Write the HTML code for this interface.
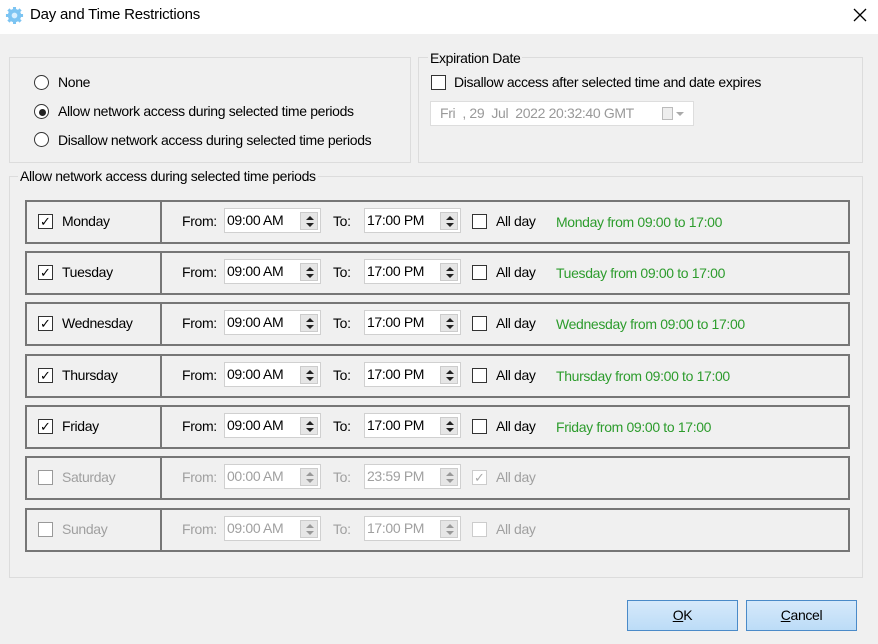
<!DOCTYPE html>
<html><head><meta charset="utf-8"><style>
*{box-sizing:border-box;margin:0;padding:0}
body{width:878px;height:644px;background:#f0f0f0;font-family:"Liberation Sans",sans-serif;font-size:14px;color:#000;position:relative;overflow:hidden;letter-spacing:-0.35px}
.a{position:absolute;white-space:nowrap}
.title{left:0;top:0;width:878px;height:34px;background:#fff}
.grp{position:absolute;border:1px solid #dcdcdc}
.leg{position:absolute;background:#f0f0f0;padding:0 2px;line-height:16px}
.rad{position:absolute;width:15px;height:15px;border:1px solid #333;border-radius:50%;background:#fff}
.cb{position:absolute;width:15px;height:15px;border:1px solid #333;background:#fff}
.row{position:absolute;left:25px;width:825px;height:44px;border:2px solid #767676}
.row .div{position:absolute;left:133px;top:-2px;width:2px;height:44px;background:#767676}
.inp{position:absolute;width:97px;height:25px;border:1px solid #d0d0d0;background:#fff;padding-left:2px;line-height:23px}
.sp{position:absolute;right:2px;top:3px;width:18px;height:18px;background:#e6e6e6;border:1px solid #ccc}
.sp:before{content:"";position:absolute;left:5px;top:3px;border:4px solid transparent;border-bottom:4px solid #222;border-top:0}
.sp:after{content:"";position:absolute;left:5px;top:10px;border:4px solid transparent;border-top:4px solid #222;border-bottom:0}
.dis{color:#a0a0a0}
.dis .cb{border-color:#999}
.dis .sp:before{border-bottom-color:#999}.dis .sp:after{border-top-color:#999}
.g{color:#2d9c2d}
.ck{font-size:13px}
.btn{position:absolute;height:31px;width:111px;border:1px solid #4a8ac8;background:linear-gradient(#d6e9fa,#bcdcf7);text-align:center;line-height:29px}
</style></head><body>
<div class="a title"></div>
<svg class="a" style="left:5px;top:6px" width="19" height="19" viewBox="0 0 20 20"><g fill="#7cc4f2"><circle cx="10" cy="10" r="7"/><g stroke="#7cc4f2" stroke-width="3.2"><path d="M10 1v18M1 10h18M3.6 3.6l12.8 12.8M16.4 3.6L3.6 16.4"/></g></g><circle cx="10" cy="10" r="3" fill="#d6efff"/></svg>
<div class="a" style="left:30px;top:6px;font-size:15px;letter-spacing:-0.2px">Day and Time Restrictions</div>
<svg class="a" style="left:853px;top:8px" width="14" height="14" viewBox="0 0 14 14"><path d="M1 1L13 13M13 1L1 13" stroke="#000" stroke-width="1.3"/></svg>

<div class="grp" style="left:9px;top:57px;width:402px;height:106px"></div>
<div class="rad" style="left:34px;top:75px"></div><div class="a" style="left:58px;top:74px">None</div>
<div class="rad" style="left:34px;top:104px"></div><div class="a" style="left:39px;top:109px;width:7px;height:7px;border-radius:50%;background:#222"></div><div class="a" style="left:58px;top:103px">Allow network access during selected time periods</div>
<div class="rad" style="left:34px;top:132px"></div><div class="a" style="left:58px;top:132px">Disallow network access during selected time periods</div>

<div class="grp" style="left:418px;top:57px;width:445px;height:106px"></div>
<div class="leg" style="left:428px;top:50px">Expiration Date</div>
<div class="cb" style="left:431px;top:75px"></div><div class="a" style="left:454px;top:74px">Disallow access after selected time and date expires</div>
<div class="a" style="left:430px;top:101px;width:264px;height:25px;border:1px solid #ddd;background:#fff;color:#999;line-height:23px;padding-left:9px">Fri&nbsp; , 29&nbsp; Jul&nbsp; 2022 20:32:40 GMT</div>
<div class="a" style="left:662px;top:107px;width:11px;height:13px;border:1px solid #bbb;background:#eee"></div>
<div class="a" style="left:676px;top:112px;border:4px solid transparent;border-top:4px solid #aaa"></div>

<div class="grp" style="left:9px;top:176px;width:854px;height:402px"></div>
<div class="leg" style="left:18px;top:168px">Allow network access during selected time periods</div>

<div class="row" style="top:200px"><div class="div"></div></div>
<div class="row" style="top:251px"><div class="div"></div></div>
<div class="row" style="top:302px"><div class="div"></div></div>
<div class="row" style="top:354px"><div class="div"></div></div>
<div class="row" style="top:405px"><div class="div"></div></div>
<div class="row" style="top:456px"><div class="div"></div></div>
<div class="row" style="top:508px"><div class="div"></div></div>

<div style="position:absolute;left:0;top:200px">
<div class="cb" style="left:38px;top:14px"></div><div class="a ck" style="left:40px;top:14px">✓</div><div class="a" style="left:62px;top:13px">Monday</div>
<div class="a" style="left:182px;top:13px">From:</div><div class="inp" style="left:224px;top:8px">09:00 AM<div class="sp"></div></div>
<div class="a" style="left:333px;top:13px">To:</div><div class="inp" style="left:364px;top:8px">17:00 PM<div class="sp"></div></div>
<div class="cb" style="left:472px;top:14px"></div><div class="a" style="left:496px;top:13px">All day</div>
<div class="a g" style="left:556px;top:14px">Monday from 09:00 to 17:00</div></div>

<div style="position:absolute;left:0;top:251px">
<div class="cb" style="left:38px;top:14px"></div><div class="a ck" style="left:40px;top:14px">✓</div><div class="a" style="left:62px;top:13px">Tuesday</div>
<div class="a" style="left:182px;top:13px">From:</div><div class="inp" style="left:224px;top:8px">09:00 AM<div class="sp"></div></div>
<div class="a" style="left:333px;top:13px">To:</div><div class="inp" style="left:364px;top:8px">17:00 PM<div class="sp"></div></div>
<div class="cb" style="left:472px;top:14px"></div><div class="a" style="left:496px;top:13px">All day</div>
<div class="a g" style="left:556px;top:14px">Tuesday from 09:00 to 17:00</div></div>

<div style="position:absolute;left:0;top:302px">
<div class="cb" style="left:38px;top:14px"></div><div class="a ck" style="left:40px;top:14px">✓</div><div class="a" style="left:62px;top:13px">Wednesday</div>
<div class="a" style="left:182px;top:13px">From:</div><div class="inp" style="left:224px;top:8px">09:00 AM<div class="sp"></div></div>
<div class="a" style="left:333px;top:13px">To:</div><div class="inp" style="left:364px;top:8px">17:00 PM<div class="sp"></div></div>
<div class="cb" style="left:472px;top:14px"></div><div class="a" style="left:496px;top:13px">All day</div>
<div class="a g" style="left:556px;top:14px">Wednesday from 09:00 to 17:00</div></div>

<div style="position:absolute;left:0;top:354px">
<div class="cb" style="left:38px;top:14px"></div><div class="a ck" style="left:40px;top:14px">✓</div><div class="a" style="left:62px;top:13px">Thursday</div>
<div class="a" style="left:182px;top:13px">From:</div><div class="inp" style="left:224px;top:8px">09:00 AM<div class="sp"></div></div>
<div class="a" style="left:333px;top:13px">To:</div><div class="inp" style="left:364px;top:8px">17:00 PM<div class="sp"></div></div>
<div class="cb" style="left:472px;top:14px"></div><div class="a" style="left:496px;top:13px">All day</div>
<div class="a g" style="left:556px;top:14px">Thursday from 09:00 to 17:00</div></div>

<div style="position:absolute;left:0;top:405px">
<div class="cb" style="left:38px;top:14px"></div><div class="a ck" style="left:40px;top:14px">✓</div><div class="a" style="left:62px;top:13px">Friday</div>
<div class="a" style="left:182px;top:13px">From:</div><div class="inp" style="left:224px;top:8px">09:00 AM<div class="sp"></div></div>
<div class="a" style="left:333px;top:13px">To:</div><div class="inp" style="left:364px;top:8px">17:00 PM<div class="sp"></div></div>
<div class="cb" style="left:472px;top:14px"></div><div class="a" style="left:496px;top:13px">All day</div>
<div class="a g" style="left:556px;top:14px">Friday from 09:00 to 17:00</div></div>

<div class="dis" style="position:absolute;left:0;top:456px">
<div class="cb" style="left:38px;top:14px"></div><div class="a" style="left:62px;top:13px">Saturday</div>
<div class="a" style="left:182px;top:13px">From:</div><div class="inp" style="left:224px;top:8px">00:00 AM<div class="sp"></div></div>
<div class="a" style="left:333px;top:13px">To:</div><div class="inp" style="left:364px;top:8px">23:59 PM<div class="sp"></div></div>
<div class="cb" style="left:472px;top:14px;border-color:#ccc"></div><div class="a ck" style="left:474px;top:14px;color:#aaa">✓</div><div class="a" style="left:496px;top:13px">All day</div></div>

<div class="dis" style="position:absolute;left:0;top:508px">
<div class="cb" style="left:38px;top:14px"></div><div class="a" style="left:62px;top:13px">Sunday</div>
<div class="a" style="left:182px;top:13px">From:</div><div class="inp" style="left:224px;top:8px">09:00 AM<div class="sp"></div></div>
<div class="a" style="left:333px;top:13px">To:</div><div class="inp" style="left:364px;top:8px">17:00 PM<div class="sp"></div></div>
<div class="cb" style="left:472px;top:14px;border-color:#ccc"></div><div class="a" style="left:496px;top:13px">All day</div></div>

<div class="btn" style="left:627px;top:600px"><u>O</u>K</div>
<div class="btn" style="left:746px;top:600px"><u>C</u>ancel</div>
</body></html>
